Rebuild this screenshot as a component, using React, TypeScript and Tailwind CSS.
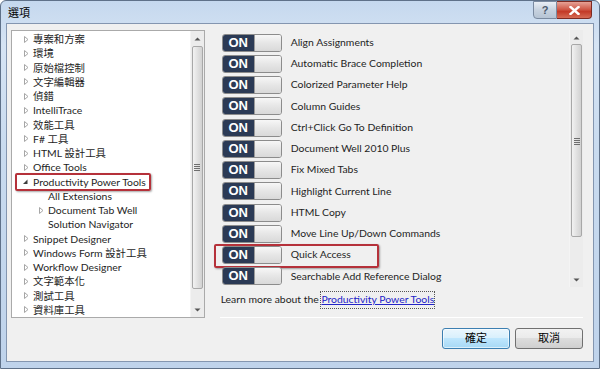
import React from 'react';

const UI = "font-['Lato','Noto_Sans_CJK_TC',sans-serif]";

const TREE = [
  { label: '專案和方案', depth: 0, arrow: 'closed' },
  { label: '環境', depth: 0, arrow: 'closed' },
  { label: '原始檔控制', depth: 0, arrow: 'closed' },
  { label: '文字編輯器', depth: 0, arrow: 'closed' },
  { label: '偵錯', depth: 0, arrow: 'closed' },
  { label: 'IntelliTrace', depth: 0, arrow: 'closed' },
  { label: '效能工具', depth: 0, arrow: 'closed' },
  { label: 'F# 工具', depth: 0, arrow: 'closed' },
  { label: 'HTML 設計工具', depth: 0, arrow: 'closed' },
  { label: 'Office Tools', depth: 0, arrow: 'closed' },
  { label: 'Productivity Power Tools', depth: 0, arrow: 'open', marked: true },
  { label: 'All Extensions', depth: 1, arrow: 'none' },
  { label: 'Document Tab Well', depth: 1, arrow: 'closed' },
  { label: 'Solution Navigator', depth: 1, arrow: 'none' },
  { label: 'Snippet Designer', depth: 0, arrow: 'closed' },
  { label: 'Windows Form 設計工具', depth: 0, arrow: 'closed' },
  { label: 'Workflow Designer', depth: 0, arrow: 'closed' },
  { label: '文字範本化', depth: 0, arrow: 'closed' },
  { label: '測試工具', depth: 0, arrow: 'closed' },
  { label: '資料庫工具', depth: 0, arrow: 'closed' },
];

const FEATURES = [
  'Align Assignments',
  'Automatic Brace Completion',
  'Colorized Parameter Help',
  'Column Guides',
  'Ctrl+Click Go To Definition',
  'Document Well 2010 Plus',
  'Fix Mixed Tabs',
  'Highlight Current Line',
  'HTML Copy',
  'Move Line Up/Down Commands',
  'Quick Access',
  'Searchable Add Reference Dialog',
];

const Arrow = ({ kind }: { kind: string }) => {
  if (kind === 'none') return <span className="w-[9px]" />;
  if (kind === 'open')
    return (
      <svg width="9" height="9" viewBox="0 0 9 9" className="shrink-0">
        <path d="M6.5 2.5 L6.5 7 L2 7 Z" fill="#3c3c3c" />
      </svg>
    );
  return (
    <svg width="9" height="9" viewBox="0 0 9 9" className="shrink-0">
      <path d="M3.5 1.5 L7 4.5 L3.5 7.5 Z" fill="#fff" stroke="#a6a6a6" strokeWidth="1" />
    </svg>
  );
};

const ScrollBar = ({ thumbTop, thumbH, gripAt }: { thumbTop: number; thumbH: number; gripAt: number }) => (
  <div className="relative w-[14px] h-full bg-[#ececec] border-l border-[#f4f4f4] flex flex-col">
    <div className="h-[15px] flex items-center justify-center">
      <svg width="7" height="4" viewBox="0 0 7 4"><path d="M0.5 3.5 L3.5 0.5 L6.5 3.5 Z" fill="#555" /></svg>
    </div>
    <div
      className="absolute left-[1px] right-[1px] rounded-[2px] border border-[#a8a8a8] bg-[linear-gradient(to_right,#f2f2f2,#dedede_60%,#d2d2d2)] flex justify-center"
      style={{ top: thumbTop, height: thumbH }}
    >
      <div className="absolute flex flex-col gap-[1px]" style={{ top: gripAt }}>
        <div className="w-[6px] h-[1px] bg-[#6e6e6e]" />
        <div className="w-[6px] h-[1px] bg-[#6e6e6e]" />
        <div className="w-[6px] h-[1px] bg-[#6e6e6e]" />
        <div className="w-[6px] h-[1px] bg-[#6e6e6e]" />
      </div>
    </div>
    <div className="mt-auto h-[15px] flex items-center justify-center">
      <svg width="7" height="4" viewBox="0 0 7 4"><path d="M0.5 0.5 L3.5 3.5 L6.5 0.5 Z" fill="#555" /></svg>
    </div>
  </div>
);

const Toggle = () => (
  <div className="flex h-[18px] w-[60px] rounded-[3px] border border-[#8c8c8c] overflow-hidden shrink-0">
    <div className="w-[31px] bg-[#2b3a55] text-white font-bold text-[13px] leading-[16px] flex items-center justify-center font-['Liberation_Sans',sans-serif]">
      ON
    </div>
    <div className="flex-1 border-l border-[#9a9a9a] bg-[linear-gradient(to_bottom,#f7f7f7,#e6e6e6_50%,#d9d9d9)]" />
  </div>
);

export default function App() {
  return (
    <div className={`${UI} w-[600px] h-[369px] relative overflow-hidden rounded-t-[6px] border border-[#5f7189] bg-[linear-gradient(to_bottom,#c5d8ee,#d6e4f4_12%,#c9dbef_40%,#bfd3eb)] text-[10.4px] text-[#1e1e1e]`}>
      {/* title bar */}
      <div className="h-[22px] flex items-start">
        <span className="pl-[7px] pt-[6px] text-[11px] leading-[12px] text-black">選項</span>
        <div className="ml-auto mr-[7px] flex">
          <div className="w-[24px] h-[18px] rounded-bl-[4px] border border-[#7a8aa0] bg-[linear-gradient(to_bottom,#e9eef5,#c7d2df_50%,#b6c4d4)] flex items-center justify-center text-[11px] font-bold text-[#4b5a6c] font-['Liberation_Sans',sans-serif]">
            ?
          </div>
          <div className="w-[35px] h-[18px] rounded-br-[4px] border border-l-0 border-[#7d2a22] bg-[linear-gradient(to_bottom,#e6a296,#cf5a49_45%,#c33a27_60%,#d66b55)] flex items-center justify-center">
            <svg width="11" height="9" viewBox="0 0 11 9">
              <path d="M1.5 1 L9.5 8 M9.5 1 L1.5 8" stroke="#fff" strokeWidth="2.4" strokeLinecap="square" />
            </svg>
          </div>
        </div>
      </div>

      {/* client area */}
      <div className="mx-[5px] h-[339px] border border-[#8496b0] bg-[#f0f0f0] flex flex-col pl-[4px] pr-[10px] pt-[6px]">
        <div className="flex">
          {/* tree */}
          <div className="w-[194px] h-[288px] border border-[#aaaaaa] bg-white flex">
            <div className="flex-1 pt-[1px] flex flex-col">
              {TREE.map((t, i) => (
                <div key={i} className="relative h-[14.28px] flex items-center">
                  <div className={t.depth ? 'pl-[24px] flex items-center' : 'pl-[9px] flex items-center'}>
                    <Arrow kind={t.arrow} />
                    <span className="ml-[3px] whitespace-nowrap leading-[14px]">{t.label}</span>
                  </div>
                  {t.marked && (
                    <div className="absolute left-[3px] top-[-2px] w-[136px] h-[18px] border-2 border-[#b5313a] rounded-[2px] shadow-[1px_1px_2px_rgba(0,0,0,0.35)]" />
                  )}
                </div>
              ))}
            </div>
            <ScrollBar thumbTop={15} thumbH={243} gripAt={117} />
          </div>

          {/* right column */}
          <div className="ml-[15px] w-[364px] flex flex-col">
            <div className="h-[257px] flex">
              <div className="flex-1 pt-[2px] pl-[2px] flex flex-col">
                {FEATURES.map((f, i) => (
                  <div key={i} className="relative h-[21.33px] flex items-center">
                    <Toggle />
                    <span className="ml-[9px] whitespace-nowrap">{f}</span>
                    {f === 'Quick Access' && (
                      <div className="absolute left-[-8px] top-[-1px] w-[165px] h-[24px] border-2 border-[#b5313a] rounded-[2px] shadow-[1px_1px_2px_rgba(0,0,0,0.35)]" />
                    )}
                  </div>
                ))}
              </div>
              <ScrollBar thumbTop={14} thumbH={193} gripAt={93} />
            </div>
            <div className="mt-[4px] h-[18px] flex items-center pl-[1px] whitespace-nowrap">
              Learn more about the&nbsp;
              <span className="text-[#2323c8] underline outline outline-1 outline-dotted outline-[#555] outline-offset-0">
                Productivity Power Tools
              </span>
            </div>
            <div className="mt-[8px] h-[1px] bg-[#a0a0a0] border-b border-white" />
          </div>
        </div>

        {/* buttons */}
        <div className="mt-[10px] flex justify-end gap-[5px]">
          <button className="w-[68px] h-[21px] rounded-[3px] border border-[#3c7fb1] bg-[linear-gradient(to_bottom,#eaf6fd,#d9f0fc_45%,#bee6fd_50%,#a7d9f5)] shadow-[inset_0_0_0_1px_rgba(255,255,255,0.6)] text-[11px] text-black">
            確定
          </button>
          <button className="w-[68px] h-[21px] rounded-[3px] border border-[#707070] bg-[linear-gradient(to_bottom,#f2f2f2,#ebebeb_45%,#dddddd_50%,#cfcfcf)] text-[11px] text-black">
            取消
          </button>
        </div>
      </div>
    </div>
  );
}
